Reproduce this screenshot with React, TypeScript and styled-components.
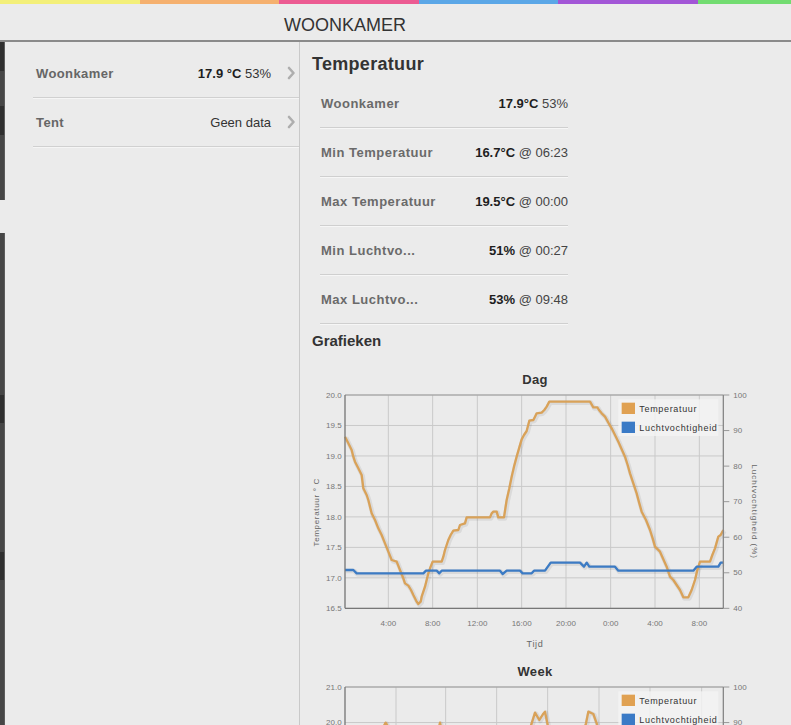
import React from 'react';
import styled, { createGlobalStyle } from 'styled-components';

// Basisstijl
const GlobalStyle = createGlobalStyle`
  html, body {
    margin: 0;
    padding: 0;
    background: #ebebeb;
  }
  body {
    font-family: "Liberation Sans", Arial, sans-serif;
    color: #333;
    overflow: hidden;
  }
`;

const COLORS = ['#f3ef79', '#f5b06e', '#ec5b92', '#5ba7e7', '#a256d6', '#72dc71'];

const Page = styled.div`
  min-height: 100vh;
`;

const ColorBar = styled.div`
  display: flex;
  height: 4px;
  overflow: hidden;
`;

const ColorSegment = styled.div<{ $color: string }>`
  flex: 0 0 139.5px;
  background: ${p => p.$color};
`;

const Header = styled.header`
  box-sizing: border-box;
  height: 38px;
  padding-top: 6px;
  display: flex;
  align-items: center;
  border-bottom: 2px solid #8a8a8a;
`;

const HeaderTitle = styled.h1`
  margin: 0;
  width: 690px;
  text-align: center;
  font-size: 18px;
  font-weight: normal;
  color: #333;
`;

const Body = styled.div`
  display: flex;
  min-height: 683px;
`;

const EdgeStrip = styled.div`
  width: 5px;
  flex: 0 0 5px;
  display: flex;
  flex-direction: column;
`;

const EdgeBlock = styled.div<{ $h?: number; $tone: 'dark' | 'mid' | 'none' }>`
  height: ${p => (p.$h ? `${p.$h}px` : 'auto')};
  flex: ${p => (p.$h ? '0 0 auto' : '1')};
  background: ${p => (p.$tone === 'dark' ? '#2f2f2f' : p.$tone === 'mid' ? '#464646' : 'transparent')};
  border-right: 1px solid ${p => (p.$tone === 'none' ? 'transparent' : '#5c5c5c')};
`;

const Sidebar = styled.aside`
  width: 266px;
  flex: 0 0 266px;
  padding: 7px 0 0 28px;
  border-right: 1px solid #c9c9c9;
`;

const ListRow = styled.div`
  display: flex;
  align-items: center;
  height: 48px;
  padding-left: 3px;
  border-bottom: 1px solid #d0d0d0;
  box-shadow: 0 1px 0 #f5f5f5;
`;

const ListLabel = styled.span`
  flex: 1;
  font-size: 13px;
  font-weight: bold;
  color: #666;
  letter-spacing: 0.4px;
`;

const ListValue = styled.span`
  font-size: 13px;
  color: #333;
  b {
    color: #1e1e1e;
  }
`;

const Chevron = styled.svg`
  width: 10px;
  height: 14px;
  margin: 0 3px 0 15px;
  flex: 0 0 auto;
`;

const Main = styled.main`
  flex: 1;
  min-width: 0;
`;

const SectionTitle = styled.h2`
  margin: 11px 0 0 12px;
  font-size: 18px;
  line-height: 22px;
  font-weight: bold;
  color: #333;
  letter-spacing: 0.3px;
`;

const SubTitle = styled.h3`
  margin: 8px 0 10px 12px;
  font-size: 15px;
  line-height: 18px;
  font-weight: bold;
  color: #333;
`;

const Table = styled.div`
  margin: 4px 0 0 20px;
  width: 248px;
`;

const TableRow = styled.div`
  display: flex;
  align-items: center;
  justify-content: space-between;
  height: 48px;
  padding-left: 1px;
  border-bottom: 1px solid #cfcfcf;
  box-shadow: 0 1px 0 #f6f6f6;
`;

const TableLabel = styled.span`
  font-size: 13px;
  font-weight: bold;
  color: #6a6a6a;
  letter-spacing: 0.5px;
`;

const TableValue = styled.span`
  font-size: 13px;
  color: #444;
  b {
    color: #1e1e1e;
  }
`;

const ChartSvg = styled.svg`
  display: block;
  font-family: "Liberation Sans", Arial, sans-serif;
`;

// Grafiekgebied in viewBox-eenheden (3x pixels)
const PL = 135;
const PR = 1270;
const PT = 105;
const PB = 745;

type Pt = [number, number];

interface ChartProps {
  title: string;
  leftTicks: string[];
  rightTicks: string[];
  xTicks: { x: number; label: string }[];
  temp: Pt[];
  humidity: Pt[];
}

const toPoints = (pts: Pt[]) => pts.map(p => p.join(',')).join(' ');

const Chart: React.FC<ChartProps> = ({ title, leftTicks, rightTicks, xTicks, temp, humidity }) => {
  const ly = (i: number) => PT + (i * (PB - PT)) / (leftTicks.length - 1);
  const ry = (i: number) => PT + (i * (PB - PT)) / (rightTicks.length - 1);
  return (
    <ChartSvg width={491} height={292} viewBox="0 0 1473 876">
      <text x={705} y={71} textAnchor="middle" fontSize={39} fontWeight="bold" fill="#333" letterSpacing={1}>
        {title}
      </text>

      {leftTicks.map((_, i) => (
        <line key={`h${i}`} x1={PL} x2={PR} y1={ly(i)} y2={ly(i)} stroke="#c9c9c9" strokeWidth={3} />
      ))}
      {xTicks.map(t => (
        <line key={`v${t.x}`} x1={t.x} x2={t.x} y1={PT} y2={PB} stroke="#c9c9c9" strokeWidth={3} />
      ))}

      {leftTicks.map((l, i) => (
        <text key={`l${i}`} x={125} y={ly(i) + 8} textAnchor="end" fontSize={24} fill="#777">
          {l}
        </text>
      ))}
      {rightTicks.map((l, i) => (
        <g key={`r${i}`}>
          <line x1={PR} x2={PR + 18} y1={ry(i)} y2={ry(i)} stroke="#9a9a9a" strokeWidth={3} />
          <text x={1300} y={ry(i) + 8} fontSize={24} fill="#777">
            {l}
          </text>
        </g>
      ))}
      {xTicks.map(t => (
        <text key={`x${t.x}`} x={t.x} y={798} textAnchor="middle" fontSize={24} fill="#777">
          {t.label}
        </text>
      ))}

      <text x={705} y={862} textAnchor="middle" fontSize={27} fill="#666" letterSpacing={2}>
        Tijd
      </text>
      <text transform="translate(58 457) rotate(-90)" textAnchor="middle" fontSize={24} fill="#666" letterSpacing={2}>
        Temperatuur ° C
      </text>
      <text transform="translate(1355 455) rotate(90)" textAnchor="middle" fontSize={24} fill="#666" letterSpacing={3}>
        Luchtvochtigheid (%)
      </text>

      <polyline points={toPoints(temp)} fill="none" stroke="rgba(0,0,0,0.07)" strokeWidth={14} transform="translate(3 3)" strokeLinejoin="round" />
      <polyline points={toPoints(humidity)} fill="none" stroke="rgba(0,0,0,0.07)" strokeWidth={14} transform="translate(3 3)" strokeLinejoin="round" />
      <polyline points={toPoints(temp)} fill="none" stroke="#d9a259" strokeWidth={7} strokeLinejoin="round" />
      <polyline points={toPoints(humidity)} fill="none" stroke="#3c7bc4" strokeWidth={7} strokeLinejoin="round" />

      <line x1={PL} x2={PR} y1={PT} y2={PT} stroke="#9a9a9a" strokeWidth={3} />
      <line x1={PL} x2={PL} y1={PT} y2={PB} stroke="#777" strokeWidth={4} />
      <line x1={PR} x2={PR} y1={PT} y2={PB} stroke="#888" strokeWidth={4} />
      <line x1={PL} x2={PR} y1={PB} y2={PB} stroke="#777" strokeWidth={4} />

      <rect x={955} y={118} width={300} height={110} fill="#f4f4f4" opacity={0.8} />
      <rect x={965} y={128} width={40} height={34} fill="#e0a152" />
      <rect x={965} y={185} width={40} height={34} fill="#3a7ac6" />
      <text x={1018} y={155} fontSize={27} fill="#333" letterSpacing={2}>
        Temperatuur
      </text>
      <text x={1018} y={212} fontSize={27} fill="#333" letterSpacing={2}>
        Luchtvochtigheid
      </text>
    </ChartSvg>
  );
};

const dayTemp: Pt[] = [
  [135, 230], [145, 250], [155, 270], [160, 290], [165, 305], [175, 325], [185, 345], [190, 385],
  [200, 405], [205, 420], [215, 460], [225, 480], [235, 505], [245, 525], [255, 550], [265, 575],
  [275, 600], [290, 605], [300, 630], [310, 655], [315, 670], [325, 677], [333, 690], [340, 705],
  [350, 725], [355, 732], [362, 725], [365, 710], [370, 695], [375, 680], [380, 660], [385, 640],
  [392, 620], [398, 605], [425, 605], [430, 590], [435, 570], [440, 555], [445, 540], [452, 525],
  [460, 512], [475, 510], [480, 495], [495, 490], [500, 472], [570, 472], [575, 460], [580, 455],
  [590, 455], [595, 472], [612, 472], [620, 420], [628, 385], [635, 350], [642, 320], [650, 290],
  [658, 262], [665, 238], [672, 225], [680, 213], [688, 182], [700, 180], [705, 170], [710, 160],
  [725, 158], [733, 150], [740, 140], [748, 125], [870, 125], [880, 142], [892, 142], [897, 150],
  [905, 160], [915, 170], [925, 188], [935, 205], [945, 225], [955, 245], [965, 268], [975, 290],
  [983, 315], [990, 340], [1000, 370], [1010, 400], [1018, 430], [1025, 455], [1038, 480], [1050, 510],
  [1058, 535], [1065, 560], [1080, 575], [1090, 598], [1100, 620], [1110, 650], [1120, 660], [1130, 675],
  [1140, 690], [1150, 712], [1165, 712], [1175, 690], [1185, 660], [1192, 630], [1200, 605], [1230, 605],
  [1237, 585], [1245, 565], [1255, 530], [1262, 525], [1270, 510],
];

const dayHumidity: Pt[] = [
  [135, 630], [160, 630], [170, 640], [370, 640], [378, 632], [410, 632], [418, 640], [425, 632],
  [600, 632], [608, 642], [620, 632], [660, 632], [668, 640], [695, 640], [702, 632], [735, 632],
  [752, 608], [840, 608], [852, 620], [860, 608], [868, 620], [945, 620], [955, 632], [1180, 632],
  [1190, 620], [1255, 620], [1262, 608], [1270, 608],
];

const weekTemp: Pt[] = [
  [135, 400], [160, 360], [185, 330], [210, 300], [235, 260], [250, 225], [257, 212], [265, 225],
  [280, 290], [300, 360], [330, 400], [360, 380], [390, 330], [410, 260], [420, 212], [428, 250],
  [445, 330], [470, 400], [500, 440], [530, 420], [560, 380], [600, 360], [640, 320], [670, 280],
  [690, 230], [705, 182], [718, 204], [730, 185], [735, 179], [742, 214], [760, 300], [790, 380],
  [820, 330], [845, 260], [858, 214], [865, 179], [880, 186], [890, 214], [910, 300], [940, 380],
  [970, 420], [1000, 380], [1030, 330], [1060, 300], [1090, 320], [1120, 360], [1150, 400], [1180, 380],
  [1210, 340], [1240, 330], [1270, 320],
];

const weekHumidity: Pt[] = [
  [135, 625], [200, 625], [210, 615], [300, 615], [310, 630], [420, 630], [430, 610], [520, 610],
  [530, 625], [650, 625], [660, 605], [760, 605], [770, 620], [880, 620], [890, 600], [990, 600],
  [1000, 615], [1120, 615], [1130, 630], [1270, 630],
];

const dayX = [
  { x: 265, label: '4:00' },
  { x: 398, label: '8:00' },
  { x: 532, label: '12:00' },
  { x: 665, label: '16:00' },
  { x: 798, label: '20:00' },
  { x: 932, label: '0:00' },
  { x: 1065, label: '4:00' },
  { x: 1198, label: '8:00' },
];

const weekX = [
  { x: 288, label: 'za' },
  { x: 437, label: 'zo' },
  { x: 590, label: 'ma' },
  { x: 743, label: 'di' },
  { x: 897, label: 'wo' },
  { x: 1050, label: 'do' },
  { x: 1205, label: 'vr' },
];

const humidityTicks = ['100', '90', '80', '70', '60', '50', '40'];

const stats = [
  { label: 'Woonkamer', strong: '17.9°C', rest: ' 53%' },
  { label: 'Min Temperatuur', strong: '16.7°C', rest: ' @ 06:23' },
  { label: 'Max Temperatuur', strong: '19.5°C', rest: ' @ 00:00' },
  { label: 'Min Luchtvo...', strong: '51%', rest: ' @ 00:27' },
  { label: 'Max Luchtvo...', strong: '53%', rest: ' @ 09:48' },
];

const ChevronIcon = () => (
  <Chevron viewBox="0 0 10 14">
    <path d="M3 2 L7.5 7 L3 12" fill="none" stroke="#aeaeae" strokeWidth={2.6} strokeLinecap="round" strokeLinejoin="round" />
  </Chevron>
);

export default function App() {
  return (
    <Page>
      <GlobalStyle />
      <ColorBar>
        {COLORS.map(c => (
          <ColorSegment key={c} $color={c} />
        ))}
      </ColorBar>
      <Header>
        <HeaderTitle>WOONKAMER</HeaderTitle>
      </Header>
      <Body>
        <EdgeStrip>
          <EdgeBlock $h={29} $tone="dark" />
          <EdgeBlock $h={35} $tone="mid" />
          <EdgeBlock $h={29} $tone="dark" />
          <EdgeBlock $h={65} $tone="mid" />
          <EdgeBlock $h={33} $tone="none" />
          <EdgeBlock $h={162} $tone="mid" />
          <EdgeBlock $h={28} $tone="dark" />
          <EdgeBlock $h={129} $tone="mid" />
          <EdgeBlock $h={28} $tone="dark" />
          <EdgeBlock $tone="mid" />
        </EdgeStrip>
        <Sidebar>
          <ListRow>
            <ListLabel>Woonkamer</ListLabel>
            <ListValue>
              <b>17.9 °C</b> 53%
            </ListValue>
            <ChevronIcon />
          </ListRow>
          <ListRow>
            <ListLabel>Tent</ListLabel>
            <ListValue>Geen data</ListValue>
            <ChevronIcon />
          </ListRow>
        </Sidebar>
        <Main>
          <SectionTitle>Temperatuur</SectionTitle>
          <Table>
            {stats.map(s => (
              <TableRow key={s.label}>
                <TableLabel>{s.label}</TableLabel>
                <TableValue>
                  <b>{s.strong}</b>
                  {s.rest}
                </TableValue>
              </TableRow>
            ))}
          </Table>
          <SubTitle>Grafieken</SubTitle>
          <Chart
            title="Dag"
            leftTicks={['20.0', '19.5', '19.0', '18.5', '18.0', '17.5', '17.0', '16.5']}
            rightTicks={humidityTicks}
            xTicks={dayX}
            temp={dayTemp}
            humidity={dayHumidity}
          />
          <Chart
            title="Week"
            leftTicks={['21.0', '20.0', '19.0', '18.0', '17.0', '16.0', '15.0']}
            rightTicks={humidityTicks}
            xTicks={weekX}
            temp={weekTemp}
            humidity={weekHumidity}
          />
        </Main>
      </Body>
    </Page>
  );
}
